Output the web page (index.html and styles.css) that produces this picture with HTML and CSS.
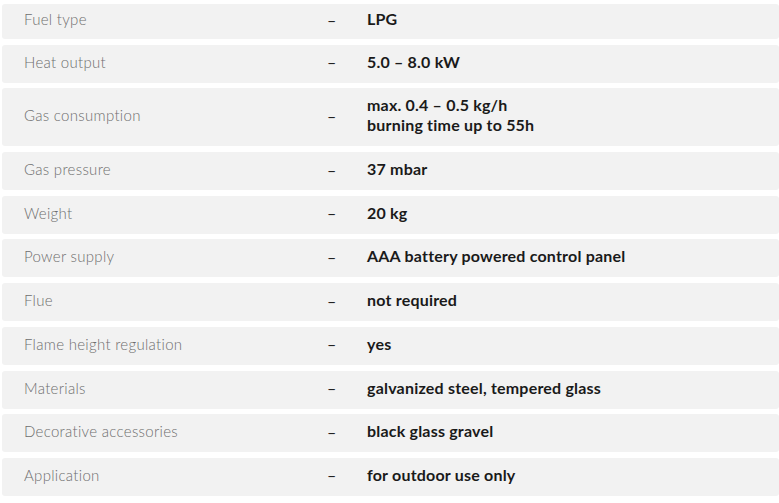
FILE: index.html
```html
<!DOCTYPE html>
<html lang="en">
<head>
<meta charset="utf-8">
<title>Specifications</title>
<link rel="stylesheet" href="styles.css">
</head>
<body>
<div class="specs">
  <div class="row first"><div class="label">Fuel type</div><div class="dash">–</div><div class="value">LPG</div></div>
  <div class="row"><div class="label">Heat output</div><div class="dash">–</div><div class="value">5.0 – 8.0 kW</div></div>
  <div class="row"><div class="label">Gas consumption</div><div class="dash">–</div><div class="value">max. 0.4 – 0.5 kg/h<br>burning time up to 55h</div></div>
  <div class="row"><div class="label">Gas pressure</div><div class="dash">–</div><div class="value">37 mbar</div></div>
  <div class="row"><div class="label">Weight</div><div class="dash">–</div><div class="value">20 kg</div></div>
  <div class="row"><div class="label">Power supply</div><div class="dash">–</div><div class="value">AAA battery powered control panel</div></div>
  <div class="row"><div class="label">Flue</div><div class="dash">–</div><div class="value">not required</div></div>
  <div class="row"><div class="label">Flame height regulation</div><div class="dash">–</div><div class="value">yes</div></div>
  <div class="row"><div class="label">Materials</div><div class="dash">–</div><div class="value">galvanized steel, tempered glass</div></div>
  <div class="row"><div class="label">Decorative accessories</div><div class="dash">–</div><div class="value">black glass gravel</div></div>
  <div class="row"><div class="label">Application</div><div class="dash">–</div><div class="value">for outdoor use only</div></div>
</div>
</body>
</html>
```
FILE: styles.css
```css
html, body {
  margin: 0;
  padding: 0;
  background: #fff;
}
body {
  font-family: Lato, "Open Sans", Arial, sans-serif;
  font-size: 15px;
}
.specs {
  display: flex;
  flex-direction: column;
  gap: 5.7px;
  padding: 4px 0 0 2px;
}
.row {
  display: grid;
  grid-template-columns: 303px 40px 1fr;
  align-items: center;
  min-height: 38px;
  padding: 0 0 4px 22px;
  background: #f2f2f2;
  border-radius: 3px;
  box-sizing: border-box;
}
.row.first {
  min-height: 35px;
  padding-bottom: 5px;
}
.row.first .value {
  padding: 5px 0;
}
.label {
  color: #6e6e6e;
  font-weight: 300;
  line-height: 20px;
  letter-spacing: 0.3px;
}
.dash {
  color: #222;
  font-size: 16px;
}
.value {
  color: #1a1a1a;
  font-size: 16px;
  font-weight: 700;
  line-height: 20px;
  letter-spacing: 0.2px;
  padding: 7px 0;
}
```
